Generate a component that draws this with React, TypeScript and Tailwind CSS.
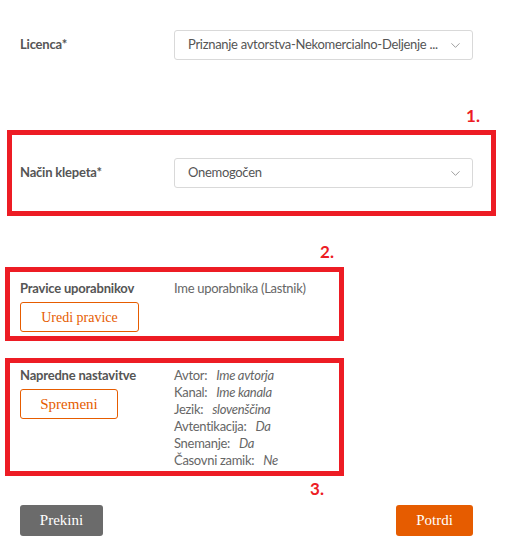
import React from "react";
import { ChevronDown } from "lucide-react";

const Select = ({ value }: { value: string }) => (
  <div className="flex items-center justify-between w-[299px] h-[30px] border border-[#d9d9d9] rounded-[3px] pl-[13px] pr-[9px] bg-white">
    <span className="text-[13px] tracking-[-0.3px] text-[#555] whitespace-nowrap">{value}</span>
    <ChevronDown size={15} strokeWidth={1.3} className="text-[#888] shrink-0 ml-2" />
  </div>
);

const details = [
  ["Avtor:", "Ime avtorja"],
  ["Kanal:", "Ime kanala"],
  ["Jezik:", "slovenščina"],
  ["Avtentikacija:", "Da"],
  ["Snemanje:", "Da"],
  ["Časovni zamik:", "Ne"],
];

const App = () => {
  return (
    <div className="w-[523px] h-[557px] bg-white font-['Lato','Noto_Sans',sans-serif] text-[#555]">
      <div className="flex items-center pt-[30px] pl-[20px]">
        <p className="w-[154px] text-[13px] tracking-[-0.2px] font-bold text-[#555]">Licenca*</p>
        <Select value="Priznanje avtorstva-Nekomercialno-Deljenje ..." />
      </div>

      <div className="flex justify-end pr-[43px] mt-[46px] h-[24px]">
        <span className="text-[17px] leading-[20px] font-bold text-[#ed1c24]">1.</span>
      </div>
      <div className="ml-[7px] w-[489px] h-[86px] border-[5px] border-[#ed1c24] flex items-center pl-[8px]">
        <p className="w-[154px] text-[13px] tracking-[-0.2px] font-bold text-[#555]">Način klepeta*</p>
        <Select value="Onemogočen" />
      </div>

      <div className="flex justify-end w-[344px] pr-[10px] mt-[26px] h-[25px]">
        <span className="text-[17px] leading-[20px] font-bold text-[#ed1c24]">2.</span>
      </div>
      <div className="ml-[5px] w-[339px] h-[74px] border-[5px] border-[#ed1c24] flex pl-[10px] pt-[8px]">
        <div className="w-[154px] flex flex-col gap-[5px]">
          <p className="text-[13px] leading-[17px] tracking-[-0.2px] font-bold text-[#555]">Pravice uporabnikov</p>
          <button className="w-[119px] h-[30px] border border-[#e65c00] rounded-[3px] text-[#e65c00] text-[14px] font-['Liberation_Serif',serif]">
            Uredi pravice
          </button>
        </div>
        <p className="text-[13px] leading-[17px] tracking-[-0.3px] text-[#666]">Ime uporabnika (Lastnik)</p>
      </div>

      <div className="ml-[5px] mt-[17px] w-[339px] h-[118px] border-[5px] border-[#ed1c24] flex pl-[10px] pt-[4px]">
        <div className="w-[154px] flex flex-col gap-[5px]">
          <p className="text-[13px] leading-[17px] tracking-[-0.2px] font-bold text-[#555]">Napredne nastavitve</p>
          <button className="w-[98px] h-[30px] border border-[#e65c00] rounded-[3px] text-[#e65c00] text-[15px] font-['Liberation_Serif',serif]">
            Spremeni
          </button>
        </div>
        <div className="flex flex-col">
          {details.map(([k, v]) => (
            <p key={k} className="text-[13px] leading-[17px] tracking-[-0.3px] text-[#666]">
              {k}
              <span className="italic ml-[9px]">{v}</span>
            </p>
          ))}
        </div>
      </div>
      <div className="flex justify-end w-[344px] pr-[20px] h-[24px] pt-[3px]">
        <span className="text-[17px] leading-[20px] font-bold text-[#ed1c24]">3.</span>
      </div>

      <div className="flex justify-between px-[20px] pr-[50px] mt-[5px]">
        <button className="w-[83px] h-[31px] bg-[#6b6b6b] rounded-[3px] text-white text-[15px] font-['Liberation_Serif',serif]">
          Prekini
        </button>
        <button className="w-[77px] h-[31px] bg-[#e65c00] rounded-[3px] text-white text-[15px] font-['Liberation_Serif',serif]">
          Potrdi
        </button>
      </div>
    </div>
  );
};

export default App;
